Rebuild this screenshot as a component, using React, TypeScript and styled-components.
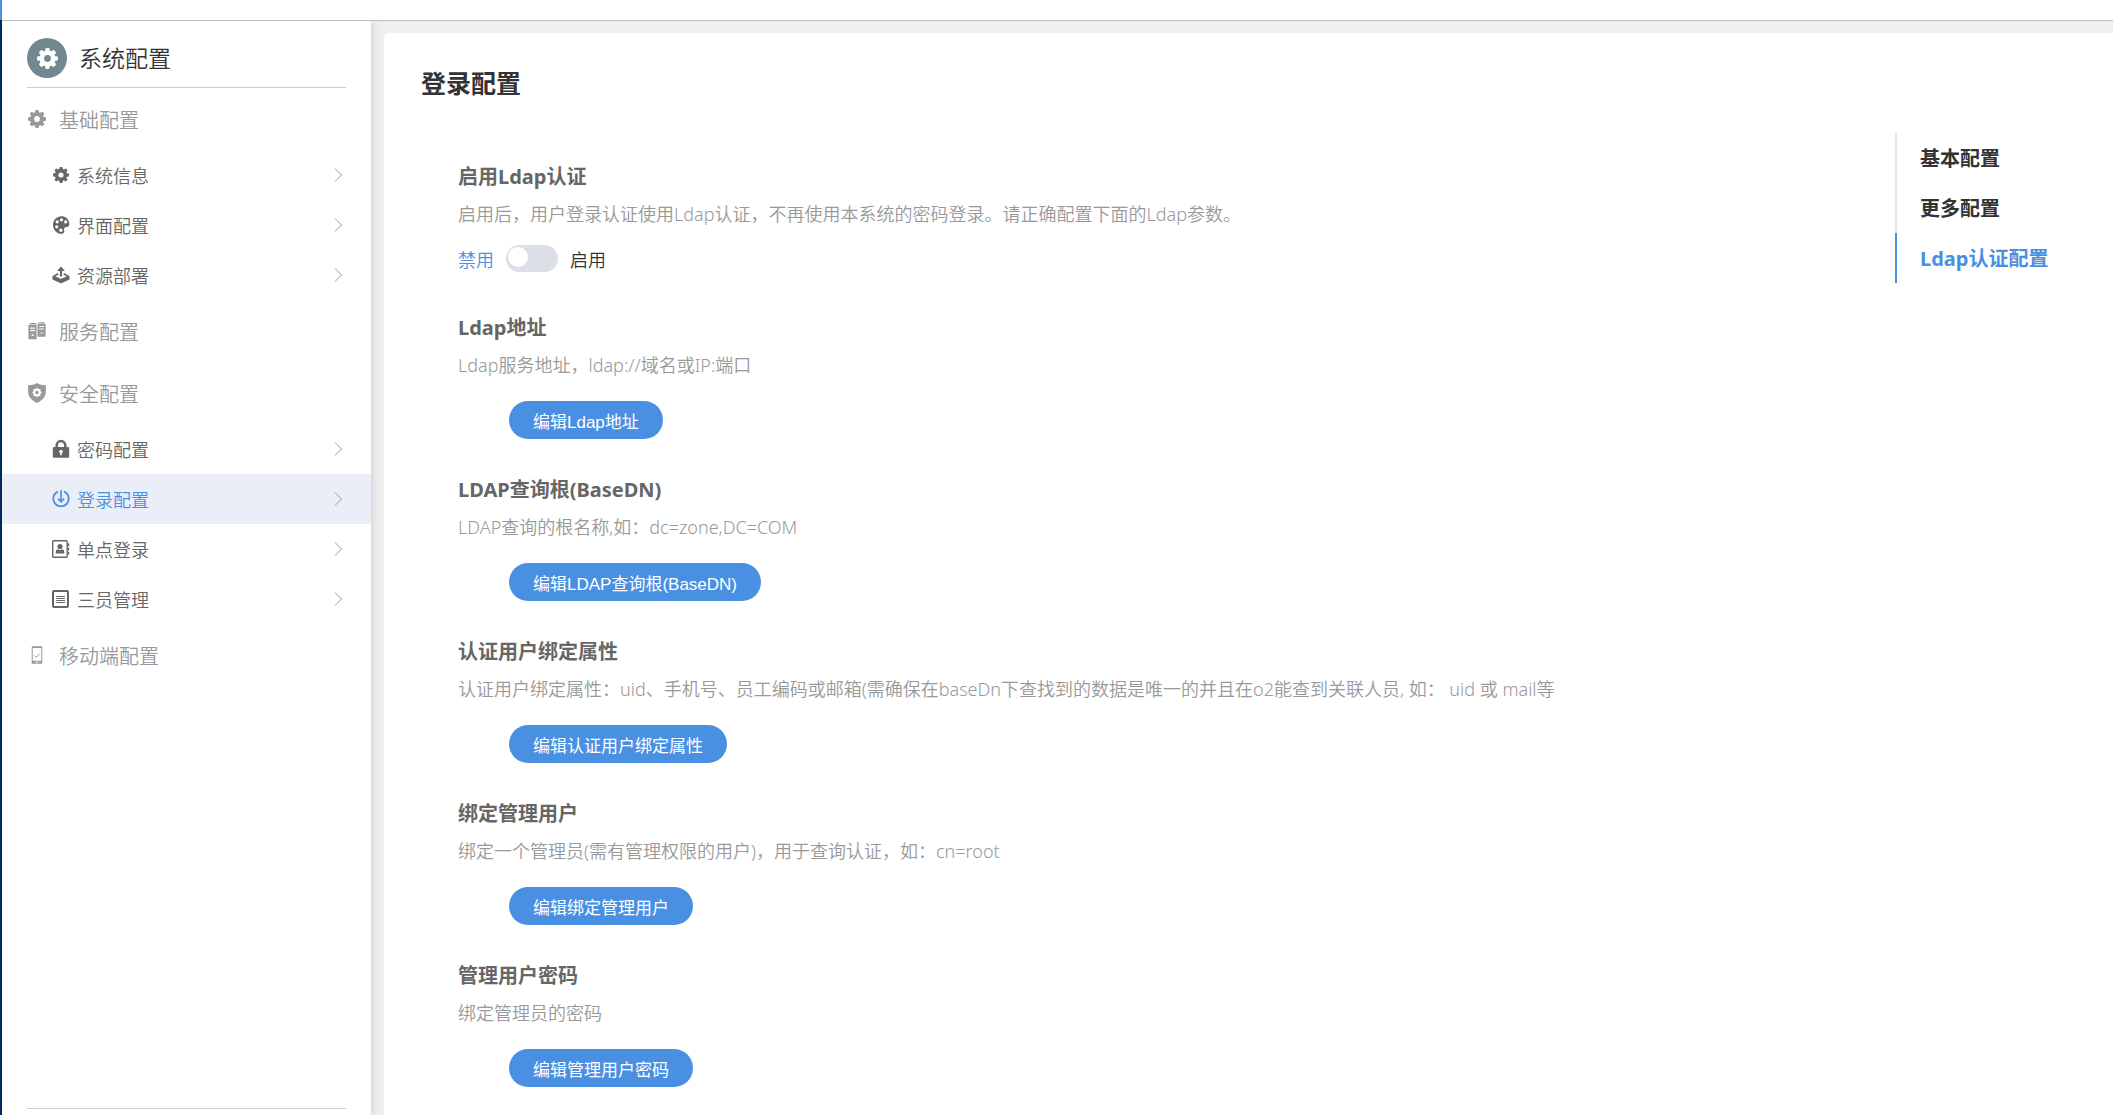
import React, { useState } from 'react';
import styled, { createGlobalStyle } from 'styled-components';

const colors = {
  primary: '#4a90e2',
  ink: '#333333',
  text: '#666666',
  muted: '#999999',
  line: '#cccccc',
  track: '#dcdfe6',
  rail: '#e4e7ed',
  page: '#efefef',
};

const GlobalStyle = createGlobalStyle`
  * { box-sizing: border-box; }
  body {
    margin: 0;
    background: ${colors.page};
    color: ${colors.ink};
    font-family: "Noto Sans", "Noto Sans CJK SC", sans-serif;
    font-size: 18px;
    font-weight: 350;
  }
  h1, h2, h3, p, ul { margin: 0; padding: 0; }
  ul { list-style: none; }
  a { color: inherit; text-decoration: none; }
`;

const Page = styled.div`
  display: flex;
  height: 100vh;
  overflow: hidden;
`;

const DesktopEdge = styled.div`
  flex: none;
  width: 2px;
  background: linear-gradient(${colors.primary} 20px, #002a5c 20px);
`;

const Window = styled.div`
  flex: 1;
  min-width: 0;
  display: flex;
  flex-direction: column;
`;

const TopBar = styled.header`
  flex: none;
  height: 21px;
  background: #ffffff;
  border-bottom: 1px solid #bbbfbc;
`;

const Workspace = styled.div`
  flex: 1;
  min-height: 0;
  display: flex;
`;

const Sidebar = styled.aside`
  flex: none;
  width: 369px;
  display: flex;
  flex-direction: column;
  background: #ffffff;
  box-shadow: 0 0 8px #c4c4c4;
  clip-path: inset(0 -12px 0 0);
`;

const SidebarHead = styled.div`
  display: flex;
  align-items: center;
  gap: 12px;
  height: 67px;
  margin: 0 25px;
  padding: 17px 0 9px;
  border-bottom: 1px solid ${colors.line};
`;

const Badge = styled.span`
  display: flex;
  align-items: center;
  justify-content: center;
  width: 40px;
  height: 40px;
  border-radius: 50%;
  background: #738791;
  color: #ffffff;
`;

const SidebarTitle = styled.h1`
  font-size: 23px;
  line-height: 40px;
  font-weight: inherit;
`;

const Menu = styled.nav`
  flex: 1;
`;

const GroupTitle = styled.h2`
  display: flex;
  align-items: center;
  gap: 12px;
  height: 62px;
  padding: 0 25px;
  color: ${colors.muted};
  font-size: 20px;
  font-weight: inherit;
`;

const MenuLink = styled.a<{ $active: boolean }>`
  display: flex;
  align-items: center;
  gap: 7px;
  height: 50px;
  padding: 0 25px 0 50px;
  background: ${(p) => (p.$active ? '#eaeff7' : 'transparent')};
  color: ${(p) => (p.$active ? colors.primary : colors.text)};
  font-size: 18px;
`;

const MenuLabel = styled.span`
  flex: 1;
`;

const Svg = styled.svg`
  flex: none;
  display: block;
`;

const Chevron = styled(Svg)`
  color: ${colors.muted};
`;

const SidebarFoot = styled.div`
  height: 7px;
  margin: 0 25px;
  border-top: 1px solid ${colors.line};
`;

const Content = styled.main`
  flex: 1;
  min-width: 0;
  padding: 12px 0 0 13px;
`;

const Card = styled.div`
  height: 100%;
  padding-left: 37px;
  background: #ffffff;
  border-radius: 6px 0 0 0;
`;

const CardTitle = styled.h1`
  font-size: 25px;
  line-height: 100px;
  font-weight: 700;
`;

const CardBody = styled.div`
  display: flex;
  align-items: flex-start;
`;

const Sections = styled.div`
  flex: 1;
  min-width: 0;
  padding: 25px 0 0 37px;
`;

const Section = styled.section`
  display: flex;
  flex-direction: column;
  align-items: flex-start;
  padding-bottom: 32px;
`;

const SectionTitle = styled.h3`
  color: ${colors.text};
  font-size: 20px;
  line-height: 38px;
  font-weight: 700;
`;

const Hint = styled.p`
  color: ${colors.muted};
  font-size: 18px;
  line-height: 36px;
  white-space: pre-wrap;
`;

const EditButton = styled.button`
  height: 38px;
  margin: 18px 0 0 51px;
  padding: 0 24px;
  border: 0;
  border-radius: 19px;
  background: ${colors.primary};
  color: #ffffff;
  font-family: "Liberation Sans", "Noto Sans CJK SC", sans-serif;
  font-size: 17px;
  font-weight: 400;
  cursor: pointer;
`;

const SwitchRow = styled.label`
  display: flex;
  align-items: center;
  gap: 12px;
  height: 27px;
  margin: 13px 0 5px;
  cursor: pointer;
`;

const SwitchText = styled.span<{ $on: boolean }>`
  color: ${(p) => (p.$on ? colors.primary : colors.ink)};
  font-size: 18px;
`;

const Switch = styled.input`
  appearance: none;
  display: flex;
  width: 52px;
  height: 27px;
  margin: 0;
  padding: 2px;
  border-radius: 14px;
  background: ${colors.track};
  cursor: pointer;

  &::before {
    content: "";
    width: 20px;
    height: 20px;
    border-radius: 50%;
    background: #ffffff;
  }
  &:checked {
    justify-content: flex-end;
    background: ${colors.primary};
  }
`;

const Anchors = styled.nav`
  flex: none;
  width: 218px;
`;

const AnchorLink = styled.a<{ $active: boolean }>`
  display: block;
  padding: 2px 0 0 23px;
  border-left: 2px solid ${(p) => (p.$active ? colors.primary : colors.rail)};
  color: ${(p) => (p.$active ? colors.primary : colors.ink)};
  font-size: 20px;
  line-height: 48px;
  font-weight: 700;
`;

type IconName =
  | 'gear' | 'palette' | 'deploy' | 'servers' | 'shield'
  | 'lock' | 'login' | 'contact' | 'list' | 'phone';

const teeth = [0, 45, 90, 135, 180, 225, 270, 315];

const shapes: Record<IconName, React.ReactNode> = {
  gear: (
    <g>
      <circle cx="9" cy="9" r="4.9" fill="none" stroke="currentColor" strokeWidth="4" />
      {teeth.map((a) => (
        <rect key={a} x="7.1" y="0" width="3.8" height="4" rx="1.2" transform={`rotate(${a} 9 9)`} />
      ))}
    </g>
  ),
  palette: (
    <path
      fillRule="evenodd"
      d="M9.6.2C4.6.2 1 3.9 1 8.7c0 4.8 3.5 9.1 8.2 9.1 2.1 0 3.3-1.1 3.1-2.9-.2-1.5-.6-2.7.6-3.5 1.2-.8 2.7-.1 3.7-1.2C17.3 9.3 17.5 8 17.2 6.6 16.5 2.9 13.4.2 9.6.2ZM9.5 2.2a1.6 1.6 0 1 1 0 3.2 1.6 1.6 0 0 1 0-3.2ZM5.2 4.2a1.6 1.6 0 1 1 0 3.2 1.6 1.6 0 0 1 0-3.2ZM13.7 4.3a1.6 1.6 0 1 1 0 3.2 1.6 1.6 0 0 1 0-3.2ZM4.7 9.2a1.6 1.6 0 1 1 0 3.2 1.6 1.6 0 0 1 0-3.2ZM8.9 12.6a1.7 1.7 0 1 1 0 3.4 1.7 1.7 0 0 1 0-3.4Z"
    />
  ),
  deploy: (
    <g>
      <path d="M9 .6 12.9 5H10.1V10.6H7.9V5H5.1Z" />
      <path d="M6.3 7.8 1.4 10.5 9 13.7 16.6 10.5 11.7 7.8" fill="none" stroke="currentColor" strokeWidth="1.7" strokeLinejoin="round" />
      <path d="M.5 10.5 9 13.6 17.5 10.5V13.6L9.8 17Q9 17.3 8.2 17L.5 13.6Z" />
    </g>
  ),
  servers: (
    <path
      fillRule="evenodd"
      d="M2.2.9H8.4V2.6H1.4ZM.4 3H8.6V17.2H.4ZM2.2 5.6V6.7H6.9V5.6ZM2.2 8.1V9.2H6.9V8.1ZM3.7 12.2V14H5.4V12.2ZM10.7.2H16.4L17.2 1.4H9.7ZM9.5 1.9H17.6V14.8H9.5ZM11.1 4V5H16V4ZM11.1 6.4V7.4H16V6.4ZM12.9 10.5V12.1H14.4V10.5Z"
    />
  ),
  shield: (
    <g>
      <path d="M9-.9C6.6.8 3.7 1.3.1 1.3V7.6C.1 12.6 3.5 16.7 9 19 14.5 16.7 17.9 12.6 17.9 7.6V1.3C14.3 1.3 11.4.8 9-.9Z" />
      <g fill="#ffffff">
        <circle cx="9" cy="8.5" r="3.7" />
        {teeth.map((a) => (
          <rect key={a} x="8.2" y="3.9" width="1.6" height="2" transform={`rotate(${a} 9 8.5)`} />
        ))}
      </g>
      <circle cx="9" cy="8.5" r="1.7" />
    </g>
  ),
  lock: (
    <g>
      <path d="M4.7 8V5.3a4.3 4.3 0 0 1 8.6 0V8" fill="none" stroke="currentColor" strokeWidth="2.5" />
      <path
        fillRule="evenodd"
        d="M2 7H16Q17.2 7 17.2 8.2V16.6Q17.2 17.8 16 17.8H2Q.8 17.8.8 16.6V8.2Q.8 7 2 7ZM9 9.7A1.9 1.9 0 0 0 8.2 13.3V15.3H9.8V13.3A1.9 1.9 0 0 0 9 9.7Z"
      />
    </g>
  ),
  login: (
    <g fill="none" stroke="currentColor" strokeWidth="1.7">
      <path d="M5.9 1.6A7.7 7.7 0 1 0 12.1 1.6" />
      <path d="M9 .2V11.5M5.9 8.7 9 11.9 12.1 8.7" />
    </g>
  ),
  contact: (
    <g>
      <rect x=".7" y=".7" width="14.5" height="16.6" rx="1" fill="none" stroke="currentColor" strokeWidth="1.4" />
      <circle cx="8" cy="6.5" r="2.6" />
      <path d="M3.7 13.6V11.7Q3.7 9.7 5.9 9.3L8 10.2 10.1 9.3Q12.3 9.7 12.3 11.7V13.6Z" />
      <path d="M15.8 3.6h1.4v2.6h-1.4zM15.8 7.7h1.4v2.6h-1.4zM15.8 11.8h1.4v2.6h-1.4z" />
    </g>
  ),
  list: (
    <g fill="none" stroke="currentColor">
      <rect x="1" y="1" width="15" height="16" rx="1" strokeWidth="2" />
      <path d="M4.2 6.5H12.9M4.2 8.5H12.9M4.2 10.5H12.9M4.2 12.5H12.9" strokeWidth="1.1" />
    </g>
  ),
  phone: (
    <g>
      <path
        fillRule="evenodd"
        d="M4.8.2H13.2Q14.3.2 14.3 1.3V16.7Q14.3 17.8 13.2 17.8H4.8Q3.7 17.8 3.7 16.7V1.3Q3.7.2 4.8.2ZM4.7 2V14.8H13.3V2ZM7.5 15.8V16.8H10.5V15.8Z"
      />
      <path d="M6.3 9.4 8.3 11.3 11.8 7.7" fill="none" stroke="currentColor" strokeWidth="1" />
    </g>
  ),
};

function Icon({ name, size = 18 }: { name: IconName; size?: number }) {
  return (
    <Svg width={size} height={size} viewBox="0 0 18 18" fill="currentColor" overflow="visible" aria-hidden="true">
      {shapes[name]}
    </Svg>
  );
}

const GroupIcon = styled.span`
  display: flex;
  justify-content: center;
  width: 20px;
`;

const ItemIcon = styled.span`
  display: flex;
  align-items: center;
  justify-content: center;
  width: 18px;
  height: 18px;
`;

interface Item { label: string; icon: IconName; size?: number }
interface Group { label: string; icon: IconName; items: Item[] }

const groups: Group[] = [
  {
    label: '基础配置',
    icon: 'gear',
    items: [
      { label: '系统信息', icon: 'gear', size: 16 },
      { label: '界面配置', icon: 'palette' },
      { label: '资源部署', icon: 'deploy' },
    ],
  },
  { label: '服务配置', icon: 'servers', items: [] },
  {
    label: '安全配置',
    icon: 'shield',
    items: [
      { label: '密码配置', icon: 'lock' },
      { label: '登录配置', icon: 'login' },
      { label: '单点登录', icon: 'contact' },
      { label: '三员管理', icon: 'list' },
    ],
  },
  { label: '移动端配置', icon: 'phone', items: [] },
];

const settings = [
  { title: 'Ldap地址', hint: 'Ldap服务地址，ldap://域名或IP:端口' },
  { title: 'LDAP查询根(BaseDN)', hint: 'LDAP查询的根名称,如：dc=zone,DC=COM' },
  {
    title: '认证用户绑定属性',
    hint: '认证用户绑定属性：uid、手机号、员工编码或邮箱(需确保在baseDn下查找到的数据是唯一的并且在o2能查到关联人员, 如： uid 或 mail等',
  },
  { title: '绑定管理用户', hint: '绑定一个管理员(需有管理权限的用户)，用于查询认证，如：cn=root' },
  { title: '管理用户密码', hint: '绑定管理员的密码' },
];

const anchors = ['基本配置', '更多配置', 'Ldap认证配置'];

export default function App() {
  const [current, setCurrent] = useState('登录配置');
  const [anchor, setAnchor] = useState('Ldap认证配置');
  const [enabled, setEnabled] = useState(false);

  return (
    <>
      <GlobalStyle />
      <Page>
        <DesktopEdge />
        <Window>
          <TopBar />
          <Workspace>
            <Sidebar>
              <SidebarHead>
                <Badge><Icon name="gear" size={21} /></Badge>
                <SidebarTitle>系统配置</SidebarTitle>
              </SidebarHead>
              <Menu>
                {groups.map((group) => (
                  <section key={group.label}>
                    <GroupTitle>
                      <GroupIcon><Icon name={group.icon} /></GroupIcon>
                      {group.label}
                    </GroupTitle>
                    <ul>
                      {group.items.map((item) => (
                        <li key={item.label}>
                          <MenuLink href="#" $active={item.label === current} onClick={() => setCurrent(item.label)}>
                            <ItemIcon><Icon name={item.icon} size={item.size} /></ItemIcon>
                            <MenuLabel>{item.label}</MenuLabel>
                            <Chevron width="12" height="14" viewBox="0 0 12 14" fill="none" stroke="currentColor" aria-hidden="true">
                              <path d="M1 .5 7.5 7 1 13.5" />
                            </Chevron>
                          </MenuLink>
                        </li>
                      ))}
                    </ul>
                  </section>
                ))}
              </Menu>
              <SidebarFoot />
            </Sidebar>
            <Content>
              <Card>
                <CardTitle>登录配置</CardTitle>
                <CardBody>
                  <Sections>
                    <Section>
                      <SectionTitle>启用Ldap认证</SectionTitle>
                      <Hint>启用后，用户登录认证使用Ldap认证，不再使用本系统的密码登录。请正确配置下面的Ldap参数。</Hint>
                      <SwitchRow>
                        <SwitchText $on={!enabled}>禁用</SwitchText>
                        <Switch
                          type="checkbox"
                          role="switch"
                          checked={enabled}
                          onChange={(e) => setEnabled(e.target.checked)}
                        />
                        <SwitchText $on={enabled}>启用</SwitchText>
                      </SwitchRow>
                    </Section>
                    {settings.map((s) => (
                      <Section key={s.title}>
                        <SectionTitle>{s.title}</SectionTitle>
                        <Hint>{s.hint}</Hint>
                        <EditButton type="button">编辑{s.title}</EditButton>
                      </Section>
                    ))}
                  </Sections>
                  <Anchors>
                    {anchors.map((label) => (
                      <AnchorLink key={label} href="#" $active={label === anchor} onClick={() => setAnchor(label)}>
                        {label}
                      </AnchorLink>
                    ))}
                  </Anchors>
                </CardBody>
              </Card>
            </Content>
          </Workspace>
        </Window>
      </Page>
    </>
  );
}
